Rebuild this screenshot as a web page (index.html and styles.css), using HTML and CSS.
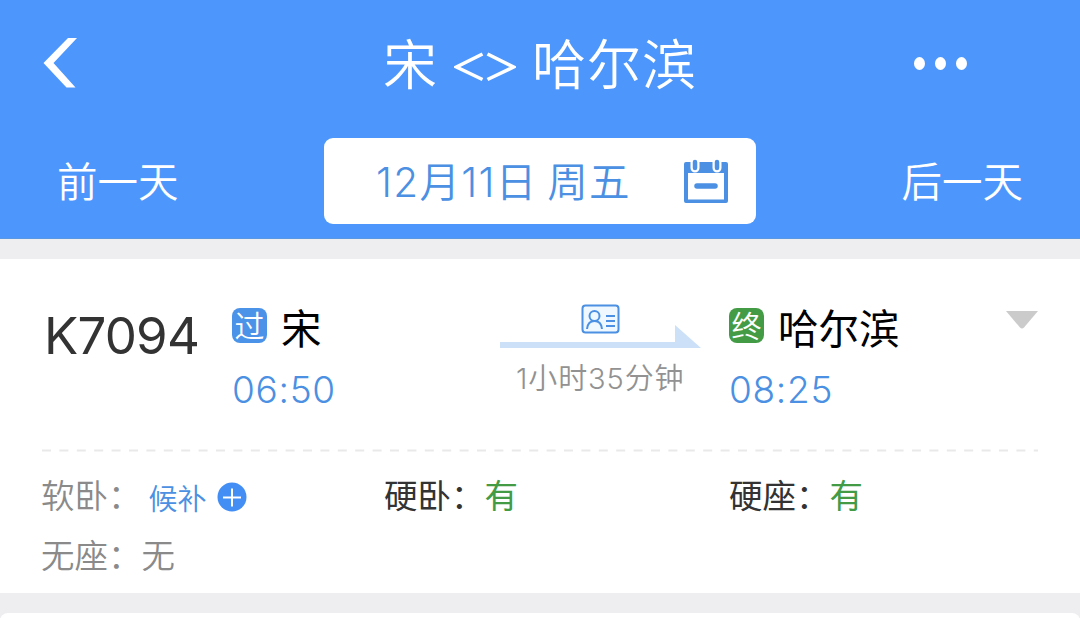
FILE: index.html
```
<!DOCTYPE html>
<html lang="zh-CN">
<head>
    <meta charset="UTF-8">
    <title>宋 - 哈尔滨</title>
    <link rel="stylesheet" href="styles.css">
</head>
<body>
    <div class="header">
        <div class="titleBar">
            <svg class="back" width="36" height="52" viewBox="0 0 36 52">
                <path d="M26 1h9L11.500 26 33.500 50.500h-9L1.500 26z" fill="#fff"/>
            </svg>
            <h1 class="title"><span>宋</span><svg class="swap" width="62" height="30" viewBox="0 0 62 30"><path d="M28.500 2 2.500 15l26 12.500M33.500 2l26 13-26 12.500" fill="none" stroke="#fff" stroke-width="3.600"/></svg><span>哈尔滨</span></h1>
            <div class="more"><i></i><i></i><i></i></div>
        </div>
        <div class="dateBar">
            <span class="day">前一天</span>
            <div class="dateBtn">
                <span class="date">12月11日 周五</span>
                <svg class="calendar" width="46" height="46" viewBox="0 0 46 46">
                    <path fill="#4b90e2" fill-rule="evenodd" d="M3 4h40q2 0 2 2v37q0 2-2 2H3q-2 0-2-2V6q0-2 2-2zM5 15v26.500h36V15z"/>
                    <path d="M12 4v6M34 4v6" stroke="#fff" stroke-width="9" stroke-linecap="round"/>
                    <path d="M12 4v6M34 4v6" stroke="#4b90e2" stroke-width="4.500" stroke-linecap="round"/>
                    <path d="M14 28h18" stroke="#4b90e2" stroke-width="5.500" stroke-linecap="round"/>
                </svg>
            </div>
            <span class="day">后一天</span>
        </div>
    </div>

    <div class="card">
        <div class="train">
            <div class="trainNo">K7094</div>
            <div class="station">
                <div class="name"><span class="tag pass">过</span><span>宋</span></div>
                <div class="time">06:50</div>
            </div>
            <div class="route">
                <svg class="idCard" width="40" height="30" viewBox="0 0 40 30">
                    <rect x="1.500" y="1.500" width="36" height="27" rx="3" fill="#f0f8ff" stroke="#4b90e2" stroke-width="2"/>
                    <g fill="none" stroke="#4b90e2" stroke-width="2">
                        <circle cx="13.500" cy="12" r="5"/>
                        <path d="M6 25c.500-5 3-8 7.500-8s7 3 7.500 8M25 12h9M25 17h9M25 22h9"/>
                    </g>
                </svg>
                <svg class="arrow" width="202" height="26" viewBox="0 0 202 26">
                    <path d="M0 17h175V0l26 23H0z" fill="#cce0f8"/>
                </svg>
                <div class="duration">1小时35分钟</div>
            </div>
            <div class="station">
                <div class="name"><span class="tag end">终</span><span>哈尔滨</span></div>
                <div class="time">08:25</div>
            </div>
            <svg class="more-down" width="32" height="18" viewBox="0 0 32 18">
                <path d="M0 0h32L18 16.500q-2 2-4 0z" fill="#cbcbcb"/>
            </svg>
        </div>
        <svg class="line" width="996" height="3" viewBox="0 0 996 3">
            <path d="M0 1.500h996" stroke="#e9e9e9" stroke-width="2" stroke-dasharray="9 8.400"/>
        </svg>
        <div class="seats">
            <div class="seat gray">软卧：<span class="wait">候补</span><svg class="plus" width="30" height="30" viewBox="0 0 30 30"><circle cx="15" cy="15" r="14.500" fill="#438ef5"/><path d="M6 15.500h18M15 6.500v18" stroke="#fff" stroke-width="2"/></svg></div>
            <div class="seat">硬卧：<span class="green">有</span></div>
            <div class="seat">硬座：<span class="green">有</span></div>
            <div class="seat gray">无座：<span>无</span></div>
        </div>
    </div>
    <div class="card next"></div>
</body>
</html>
```
FILE: styles.css
```
body{
    margin: 0;
    height: 618px;
    overflow: hidden;
    background-color: #eeeef0;
    font-family: "Inter", "Noto Sans CJK SC", sans-serif;
    color: #333;
}
svg{
    display: block;
    flex: none;
}
.header{
    height: 239px;
    box-sizing: border-box;
    background-color: #4d97fc;
    border-bottom: 1px solid #5b98e4;
    color: #fff;
}
.titleBar{
    display: grid;
    grid-template-columns: 340px 400px 340px;
    align-items: center;
    height: 128px;
}
.back{
    margin-left: 42px;
    margin-bottom: 2px;
}
.title{
    display: flex;
    align-items: center;
    justify-content: center;
    gap: 16px;
    margin: 0 0 4px;
    font-size: 54px;
    font-weight: 350;
    line-height: 80px;
    letter-spacing: 1px;
    font-family: "Noto Sans CJK SC", sans-serif;
}
.swap{
    margin-top: 9px;
}
.more{
    display: flex;
    gap: 10px;
    margin-left: 174px;
    margin-bottom: 1px;
}
.more i{
    width: 11px;
    height: 13px;
    border-radius: 50%;
    background-color: #fff;
}
.dateBar{
    display: flex;
    align-items: center;
    justify-content: space-between;
    padding: 10px 57px 0;
}
.day{
    margin-bottom: 2px;
    font-size: 40.500px;
    font-weight: 350;
    font-family: "Noto Sans CJK SC", sans-serif;
    line-height: 78px;
}
.dateBtn{
    display: flex;
    align-items: center;
    justify-content: space-between;
    box-sizing: border-box;
    width: 432px;
    height: 86px;
    padding: 0 24px 0 52px;
    border-radius: 9px;
    background-color: #fff;
}
.calendar{
    margin-right: 3px;
}
.date{
    margin-bottom: 4px;
    font-size: 40.500px;
    font-weight: 350;
    letter-spacing: 1.3px;
    word-spacing: -3px;
    color: #4b90e2;
    white-space: nowrap;
}
.card{
    height: 334px;
    margin-top: 20px;
    background-color: #fff;
    overflow: hidden;
}
.next{
    height: 20px;
    border-radius: 8px;
}
.train{
    display: grid;
    grid-template-columns: 190px 268px 229px 277px 32px;
    height: 190px;
    padding-left: 42px;
}
.trainNo{
    padding: 46px 0 0 2px;
    font-size: 51px;
    line-height: 62px;
    letter-spacing: -0.8px;
}
.station{
    padding-top: 45px;
}
.name{
    display: flex;
    align-items: center;
    height: 46px;
    font-size: 40.500px;
    line-height: 56px;
    color: #000;
    font-family: "Noto Sans CJK SC", sans-serif;
}
.tag{
    width: 35px;
    height: 35px;
    margin: 0 14px 4px 0;
    border-radius: 8px;
    color: #fff;
    font-size: 30px;
    font-weight: 350;
    line-height: 32px;
    text-align: center;
}
.pass{
    background-color: #4b93e9;
}
.end{
    background-color: #439c45;
}
.time{
    margin-top: 17px;
    font-size: 37px;
    font-weight: 350;
    line-height: 46px;
    letter-spacing: 0.7px;
    color: #4b90e2;
}
.route{
    display: flex;
    flex-direction: column;
    padding-top: 45px;
}
.idCard{
    margin-left: 81px;
}
.arrow{
    margin-top: -9px;
}
.duration{
    margin: 8px 0 0 16px;
    font-size: 29px;
    font-weight: 350;
    line-height: 40px;
    letter-spacing: 0.9px;
    color: #929292;
    white-space: nowrap;
}
.more-down{
    margin-top: 52px;
}
.line{
    margin-left: 42px;
}
.seats{
    display: grid;
    grid-template-columns: 343px 345px 1fr;
    grid-auto-rows: 60px;
    padding: 11px 0 0 41px;
}
.seat{
    display: flex;
    align-items: center;
    font-size: 33.500px;
    font-family: "Noto Sans CJK SC", sans-serif;
}
.gray{
    color: #8a8a8a;
    font-weight: 350;
}
.wait{
    margin: 7px 10px 0 7px;
    font-size: 29px;
    color: #4b90e2;
}
.plus{
    margin-top: 8px;
}
.green{
    color: #439c45;
}
```
